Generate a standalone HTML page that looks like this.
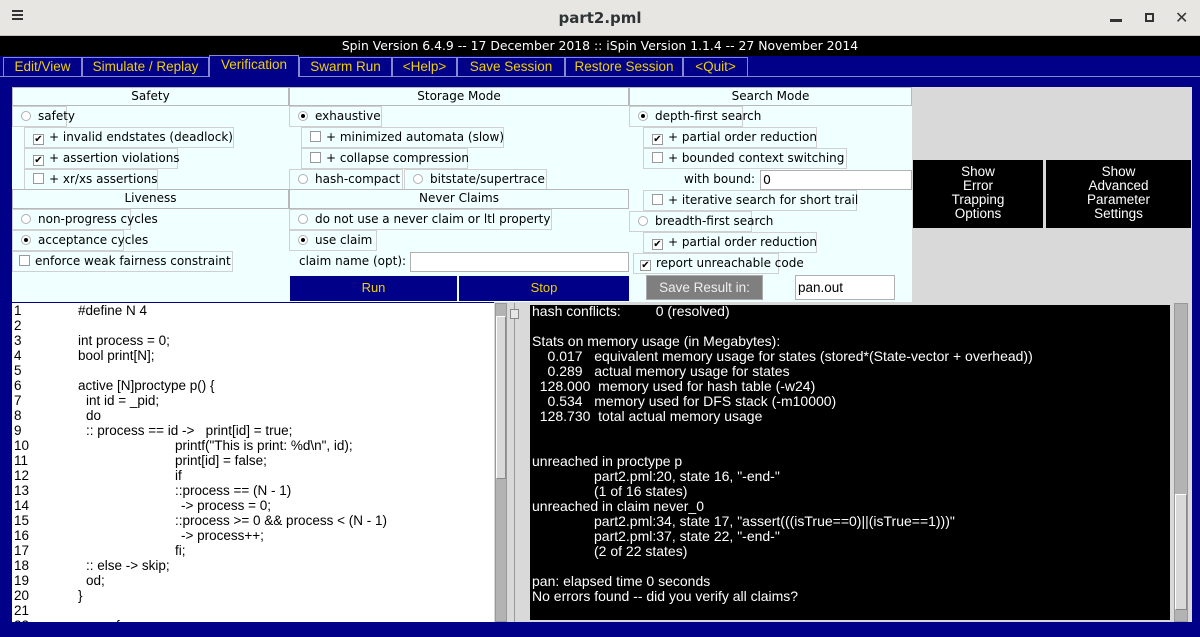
<!DOCTYPE html>
<html><head><meta charset="utf-8"><style>
*{margin:0;padding:0;box-sizing:border-box}
body{width:1200px;height:637px;overflow:hidden;background:#000088;position:relative;font-family:"DejaVu Sans",sans-serif;font-size:12px;color:#000}
.a{position:absolute}
.title{left:0;top:0;width:1200px;height:36px;background:#e8e6e3;border-bottom:1px solid #c8c4c0}
.bl{left:0;top:36px;width:1200px;height:20px;background:#000;color:#fff;text-align:center;font-size:12.4px;line-height:20px}
.tab{top:57px;height:19px;border:1px solid #8888cc;border-bottom:none;color:#f0d000;font-family:"Liberation Sans",sans-serif;font-size:13.5px;line-height:18px;text-align:center}
.panel{left:12px;top:87px;width:900px;height:215px;background:#f0ffff}
.gray{background:#d9d9d9}
.w{position:absolute;border:1px solid #d0d0d0;height:21px;line-height:19px;padding-left:8px;white-space:nowrap;background:#f0ffff}
.h{position:absolute;border:1px solid #b8b8b8;height:19px;line-height:17px;text-align:center;background:#f0ffff}
.r{display:inline-block;width:10px;height:10px;border:1px solid #b0b0b0;border-radius:50%;margin-right:7px;vertical-align:-1px;position:relative;background:#fff}
.r.on::after{content:"";position:absolute;left:2px;top:2px;width:4px;height:4px;border-radius:50%;background:#000}
.c{display:inline-block;width:11px;height:11px;border:1px solid #999;margin-right:5px;vertical-align:-1px;background:#fff;font-size:10px;line-height:9px;text-align:center}
.inp{position:absolute;background:#fff;border:1px solid #b0b0b0;font-size:12.5px;padding-left:2px}
.btn{position:absolute;background:#000088;color:#f0d000;font-family:"Liberation Sans",sans-serif;font-size:13px;text-align:center;line-height:24px}
.sb{position:absolute;background:#000;color:#fff;font-family:"Liberation Sans",sans-serif;font-size:13.5px;text-align:center;line-height:14px}
.code{left:12px;top:303px;width:482px;height:319px;background:#fff;font-family:"Liberation Sans",sans-serif;font-size:13.5px;overflow:hidden}
.code div{position:absolute;white-space:pre;line-height:15px}
.out{left:530px;top:305px;width:640px;height:315px;background:#000;color:#fff;font-family:"Liberation Sans",sans-serif;font-size:14px;overflow:hidden}
.out div{position:absolute;white-space:pre;line-height:15px}
</style></head><body>
<div class="a title">
 <div class="a" style="left:12px;top:10px;width:11px;height:2px;background:#333;box-shadow:0 4px 0 #333,0 8px 0 #333"></div>
 <div class="a" style="left:0;width:1200px;top:9px;text-align:center;font-family:'DejaVu Sans',sans-serif;font-size:15px;font-weight:bold;color:#2e3436">part2.pml</div>
 <div class="a" style="left:1110px;top:19px;width:12px;height:3px;background:#333"></div>
 <div class="a" style="left:1145px;top:13px;width:9px;height:9px;border:2px solid #333"></div>
 <div class="a" style="left:1175px;top:8px;font-size:16px;font-weight:bold;color:#333">✕</div>
</div>
<div class="a bl">Spin Version 6.4.9 -- 17 December 2018 :: iSpin Version 1.1.4 -- 27 November 2014</div>
<div class="a" style="left:0;top:76px;width:1200px;height:1px;background:#8888cc"></div>
<div class="a tab" style="left:3px;width:79px">Edit/View</div>
<div class="a tab" style="left:82px;width:127px">Simulate / Replay</div>
<div class="a tab" style="left:209px;width:90px;top:55px;height:22px;line-height:18px;background:#000088">Verification</div>
<div class="a tab" style="left:299px;width:93px">Swarm Run</div>
<div class="a tab" style="left:392px;width:65px">&lt;Help&gt;</div>
<div class="a tab" style="left:457px;width:108px">Save Session</div>
<div class="a tab" style="left:565px;width:118px">Restore Session</div>
<div class="a tab" style="left:683px;width:65px">&lt;Quit&gt;</div>

<div class="a panel"></div>
<div class="a gray" style="left:912px;top:87px;width:280px;height:215px"></div>

<div class="h" style="left:12px;top:87px;width:277px">Safety</div>
<div class="h" style="left:289px;top:87px;width:340px">Storage Mode</div>
<div class="h" style="left:629px;top:87px;width:283px">Search Mode</div>

<div class="w" style="left:12px;top:106px;width:55px"><span class="r"></span>safety</div>
<div class="w" style="left:24px;top:127px;width:210px"><span class="c">✔</span>+ invalid endstates (deadlock)</div>
<div class="w" style="left:24px;top:148px;width:154px"><span class="c">✔</span>+ assertion violations</div>
<div class="w" style="left:24px;top:169px;width:134px"><span class="c"></span>+ xr/xs assertions</div>
<div class="h" style="left:12px;top:189px;width:277px;height:20px">Liveness</div>
<div class="w" style="left:12px;top:209px;width:119px"><span class="r"></span>non-progress cycles</div>
<div class="w" style="left:12px;top:230px;width:112px"><span class="r on"></span>acceptance cycles</div>
<div class="w" style="left:12px;top:251px;width:221px;padding-left:6px"><span class="c"></span>enforce weak fairness constraint</div>

<div class="w" style="left:289px;top:106px;width:93px"><span class="r on"></span>exhaustive</div>
<div class="w" style="left:301px;top:127px;width:203px"><span class="c"></span>+ minimized automata (slow)</div>
<div class="w" style="left:301px;top:148px;width:167px"><span class="c"></span>+ collapse compression</div>
<div class="w" style="left:289px;top:169px;width:114px"><span class="r"></span>hash-compact</div>
<div class="w" style="left:404px;top:169px;width:143px"><span class="r"></span>bitstate/supertrace</div>
<div class="h" style="left:289px;top:189px;width:340px;height:20px">Never Claims</div>
<div class="w" style="left:289px;top:209px;width:263px"><span class="r"></span>do not use a never claim or ltl property</div>
<div class="w" style="left:289px;top:230px;width:88px"><span class="r on"></span>use claim</div>
<div class="a" style="left:299px;top:254px">claim name (opt):</div>
<div class="inp" style="left:410px;top:252px;width:219px;height:20px"></div>
<div class="btn" style="left:290px;top:276px;width:167px;height:25px">Run</div>
<div class="btn" style="left:459px;top:276px;width:170px;height:25px">Stop</div>

<div class="w" style="left:629px;top:106px;width:114px"><span class="r on"></span>depth-first search</div>
<div class="w" style="left:643px;top:127px;width:174px"><span class="c">✔</span>+ partial order reduction</div>
<div class="w" style="left:643px;top:148px;width:204px"><span class="c"></span>+ bounded context switching</div>
<div class="a" style="left:684px;top:172px">with bound:</div>
<div class="inp" style="left:760px;top:170px;width:152px;height:20px;line-height:18px">0</div>
<div class="w" style="left:643px;top:190px;width:214px"><span class="c"></span>+ iterative search for short trail</div>
<div class="w" style="left:629px;top:211px;width:123px"><span class="r"></span>breadth-first search</div>
<div class="w" style="left:643px;top:232px;width:174px"><span class="c">✔</span>+ partial order reduction</div>
<div class="w" style="left:633px;top:253px;width:146px;padding-left:6px"><span class="c">✔</span>report unreachable code</div>
<div class="a" style="left:646px;top:275px;width:117px;height:25px;background:#7f7f7f;border:1px solid #aaa;color:#eee;font-family:'Liberation Sans',sans-serif;font-size:13.5px;text-align:center;line-height:23px">Save Result in:</div>
<div class="inp" style="left:795px;top:275px;width:100px;height:25px;line-height:23px;font-family:'Liberation Sans',sans-serif;font-size:13.5px">pan.out</div>

<div class="sb" style="left:913px;top:160px;width:130px;height:68px;padding-top:5px">Show<br>Error<br>Trapping<br>Options</div>
<div class="sb" style="left:1046px;top:160px;width:145px;height:68px;padding-top:5px">Show<br>Advanced<br>Parameter<br>Settings</div>

<div class="a gray" style="left:494px;top:302px;width:698px;height:320px"></div>
<div class="a code">
<div style="top:0px;left:2px">1</div><div style="top:0px;left:66px">#define N 4</div>
<div style="top:15px;left:2px">2</div>
<div style="top:30px;left:2px">3</div><div style="top:30px;left:66px">int process = 0;</div>
<div style="top:45px;left:2px">4</div><div style="top:45px;left:66px">bool print[N];</div>
<div style="top:60px;left:2px">5</div>
<div style="top:75px;left:2px">6</div><div style="top:75px;left:66px">active [N]proctype p() {</div>
<div style="top:90px;left:2px">7</div><div style="top:90px;left:74px">int id = _pid;</div>
<div style="top:105px;left:2px">8</div><div style="top:105px;left:74px">do</div>
<div style="top:120px;left:2px">9</div><div style="top:120px;left:74px">:: process == id -&gt;   print[id] = true;</div>
<div style="top:135px;left:2px">10</div><div style="top:135px;left:163px">printf("This is print: %d\n", id);</div>
<div style="top:150px;left:2px">11</div><div style="top:150px;left:163px">print[id] = false;</div>
<div style="top:165px;left:2px">12</div><div style="top:165px;left:163px">if</div>
<div style="top:180px;left:2px">13</div><div style="top:180px;left:163px">::process == (N - 1)</div>
<div style="top:195px;left:2px">14</div><div style="top:195px;left:169px">-&gt; process = 0;</div>
<div style="top:210px;left:2px">15</div><div style="top:210px;left:163px">::process &gt;= 0 &amp;&amp; process &lt; (N - 1)</div>
<div style="top:225px;left:2px">16</div><div style="top:225px;left:169px">-&gt; process++;</div>
<div style="top:240px;left:2px">17</div><div style="top:240px;left:163px">fi;</div>
<div style="top:255px;left:2px">18</div><div style="top:255px;left:74px">:: else -&gt; skip;</div>
<div style="top:270px;left:2px">19</div><div style="top:270px;left:74px">od;</div>
<div style="top:285px;left:2px">20</div><div style="top:285px;left:66px">}</div>
<div style="top:300px;left:2px">21</div>
<div style="top:315px;left:2px">22</div><div style="top:315px;left:66px">never {</div>
</div>
<div class="a" style="left:495px;top:303px;width:12px;height:319px;background:#b3b3b3;border:1px solid #999"></div>
<div class="a" style="left:496px;top:316px;width:10px;height:163px;background:#d9d9d9;border:1px solid #fff;border-right-color:#888;border-bottom-color:#888"></div>
<div class="a" style="left:514px;top:303px;width:1px;height:319px;background:#999"></div>
<div class="a" style="left:510px;top:309px;width:9px;height:10px;background:#e6e6e6;border:1px solid #888"></div>
<div class="a out">
<div style="top:-1px;left:2px">hash conflicts:         0 (resolved)</div>
<div style="top:29px;left:2px">Stats on memory usage (in Megabytes):</div>
<div style="top:44px;left:2px">    0.017   equivalent memory usage for states (stored*(State-vector + overhead))</div>
<div style="top:59px;left:2px">    0.289   actual memory usage for states</div>
<div style="top:74px;left:2px">  128.000  memory used for hash table (-w24)</div>
<div style="top:89px;left:2px">    0.534   memory used for DFS stack (-m10000)</div>
<div style="top:104px;left:2px">  128.730  total actual memory usage</div>
<div style="top:149px;left:2px">unreached in proctype p</div>
<div style="top:164px;left:64px">part2.pml:20, state 16, "-end-"</div>
<div style="top:179px;left:64px">(1 of 16 states)</div>
<div style="top:194px;left:2px">unreached in claim never_0</div>
<div style="top:209px;left:64px">part2.pml:34, state 17, "assert(((isTrue==0)||(isTrue==1)))"</div>
<div style="top:224px;left:64px">part2.pml:37, state 22, "-end-"</div>
<div style="top:239px;left:64px">(2 of 22 states)</div>
<div style="top:269px;left:2px">pan: elapsed time 0 seconds</div>
<div style="top:284px;left:2px">No errors found -- did you verify all claims?</div>
</div>
<div class="a" style="left:1174px;top:303px;width:14px;height:319px;background:#b3b3b3;border:1px solid #999"></div>
<div class="a" style="left:1175px;top:494px;width:12px;height:116px;background:#d9d9d9;border:1px solid #fff;border-right-color:#888;border-bottom-color:#888"></div>
</body></html>
